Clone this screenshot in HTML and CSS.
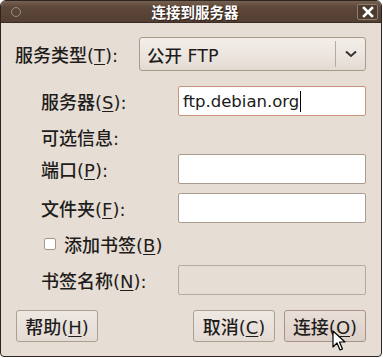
FILE: index.html
```html
<!DOCTYPE html>
<html lang="zh-CN">

    <head>
        <meta charset="UTF-8">
        <meta name="viewport" content="width=device-width, initial-scale=1.0">
        <title>连接到服务器</title>
        <link rel="stylesheet" href="styles.css">
    </head>

    <body>
        <div class="window">
            <div class="titlebar">
                <span class="menu-dot"></span>
                <span class="title">连接到服务器</span>
                <span class="close">
                    <svg width="12" height="12" viewBox="0 0 12 12">
                        <path d="M2 2 L10 10 M10 2 L2 10" stroke="#ffffff" stroke-width="2.6" stroke-linecap="square" />
                    </svg>
                </span>
            </div>

            <div class="content">
                <div class="row type-row">
                    <label class="label first">服务类型(<u>T</u>):</label>
                    <div class="combo">
                        <span class="combo-text">公开 FTP</span>
                        <span class="combo-sep"></span>
                        <svg class="chevron" width="12" height="8" viewBox="0 0 12 8">
                            <path d="M1 1.5 L6 6 L11 1.5" fill="none" stroke="#333333" stroke-width="2" />
                        </svg>
                    </div>
                </div>

                <div class="row entry-row server-row">
                    <label class="label">服务器(<u>S</u>):</label>
                    <div class="entry focused">ftp.debian.org<span class="caret"></span></div>
                </div>

                <div class="row info-row">
                    <span class="label">可选信息:</span>
                </div>

                <div class="row entry-row">
                    <label class="label">端口(<u>P</u>):</label>
                    <div class="entry"></div>
                </div>

                <div class="row entry-row folder-row">
                    <label class="label">文件夹(<u>F</u>):</label>
                    <div class="entry"></div>
                </div>

                <div class="row check-row">
                    <span class="checkbox"></span>
                    <span class="check-label">添加书签(<u>B</u>)</span>
                </div>

                <div class="row entry-row">
                    <label class="label">书签名称(<u>N</u>):</label>
                    <div class="entry disabled"></div>
                </div>

                <div class="buttons">
                    <button class="btn">帮助(<u>H</u>)</button>
                    <span class="spacer"></span>
                    <button class="btn">取消(<u>C</u>)</button>
                    <button class="btn hover">连接(<u>O</u>)</button>
                </div>
            </div>

            <svg class="pointer" width="14" height="22" viewBox="0 0 14 22">
                <path d="M1 1 L1 17 L5 13 L8 20 L10.5 19 L7.5 12 L13 12 Z" fill="#ffffff" stroke="#000000" stroke-width="1.2" stroke-linejoin="round" />
            </svg>
        </div>
    </body>

</html>
```

FILE: styles.css
```css
html,
body {
    margin: 0;
    background: #ffffff;
}

body {
    font-family: "DejaVu Sans", "Noto Sans CJK SC", sans-serif;
    font-size: 18px;
    font-weight: 500;
    color: #1f1d1b;
}

.window {
    position: relative;
    width: 380px;
    height: 355px;
    border: 1px solid #2f2520;
    border-radius: 6px 6px 4px 4px;
    background: #e6ddd5;
    overflow: hidden;
}

.titlebar {
    height: 21px;
    display: flex;
    align-items: center;
    justify-content: space-between;
    padding: 0 3px 0 10px;
    background: linear-gradient(#76604f, #5d473a 30%, #533f33);
    border-bottom: 1px solid #3a2c24;
}

.menu-dot {
    width: 8px;
    height: 8px;
    border: 1px solid #9c8b7e;
    border-radius: 50%;
}

.title {
    color: #ffffff;
    font-weight: bold;
    font-size: 14.5px;
    text-shadow: 1px 1px 1px #2a1e18;
    font-family: "Noto Sans CJK SC", sans-serif;
    margin-left: 12px;
}

.close {
    width: 19px;
    height: 14px;
    display: flex;
    align-items: center;
    justify-content: center;
    border: 1px solid #8f7d70;
    border-radius: 2px;
    background: #4e3b30;
}

.content {
    padding: 14px 15px 0 14px;
}

.row {
    display: flex;
    align-items: center;
}

.label {
    width: 137px;
    flex-shrink: 0;
    margin-left: 26px;
}

.label.first {
    width: 124px;
    margin-left: 0;
}

u {
    text-decoration: underline;
    text-underline-offset: 2px;
    text-decoration-thickness: 1px;
}

.combo {
    flex: 1;
    height: 32px;
    display: flex;
    align-items: center;
    border: 1px solid #a99a8d;
    border-radius: 3px;
    background: linear-gradient(#f3eee9, #ece5df 55%, #e3dad2);
}

.combo-text {
    flex: 1;
    padding-left: 7px;
    font-size: 17.5px;
}

.combo-sep {
    width: 1px;
    height: 26px;
    background: #b9aa9d;
}

.chevron {
    margin: 0 8px 0 9px;
}

.entry {
    flex: 1;
    height: 28px;
    display: flex;
    align-items: center;
    padding-left: 4px;
    background: #ffffff;
    border: 1px solid #aa9b8e;
    border-radius: 2px;
    font-size: 16.5px;
    color: #1a1a1a;
}

.entry.focused {
    border-color: #c9957a;
}

.entry.disabled {
    background: #e6ddd5;
    border-color: #b8a99c;
}

.caret {
    width: 1px;
    height: 21px;
    margin-left: 1px;
    background: #000000;
}

.server-row {
    margin-top: 15px;
}

.info-row {
    height: 38px;
    padding-top: 4px;
    box-sizing: border-box;
}

.folder-row {
    margin-top: 9px;
}

.check-row {
    height: 42px;
    padding-left: 29px;
}

.checkbox {
    width: 10px;
    height: 10px;
    border: 1px solid #a89888;
    border-radius: 2px;
    background: #ffffff;
    margin-right: 8px;
}

.buttons {
    display: flex;
    gap: 9px;
    margin-top: 15px;
    padding-left: 1px;
}

.spacer {
    flex: 1;
}

.btn {
    width: 82px;
    height: 32px;
    padding: 0;
    font-family: inherit;
    font-size: 18px;
    font-weight: 500;
    color: #1f1d1b;
    border: 1px solid #ada092;
    border-radius: 3px;
    background: linear-gradient(#eee8e3, #e4dbd4);
}

.btn.hover {
    background: linear-gradient(#e9dfd8, #ddd0c8);
    border-color: #a89484;
}

.pointer {
    position: absolute;
    left: 331px;
    top: 329px;
}
```
